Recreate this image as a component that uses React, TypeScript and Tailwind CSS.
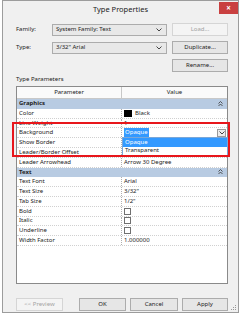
import { ReactNode } from 'react';

const font = { fontFamily: '"Noto Sans", "Open Sans", sans-serif' };

function Chevron() {
  return (
    <svg width="6" height="4" viewBox="0 0 6 4" className="shrink-0">
      <path d="M0.5 0.5 L3 3 L5.5 0.5" fill="none" stroke="#444" strokeWidth="1" />
    </svg>
  );
}

function Collapse() {
  return (
    <svg width="5" height="6" viewBox="0 0 5 6">
      <path d="M0.5 2.5 L2.5 0.5 L4.5 2.5 M0.5 5 L2.5 3 L4.5 5" fill="none" stroke="#333" strokeWidth="0.8" />
    </svg>
  );
}

function Check() {
  return <div className="w-[7px] h-[7px] border border-[#707070] bg-white" />;
}

type Row = { section?: boolean; name: string; value?: ReactNode };

const rows: Row[] = [
  { section: true, name: 'Graphics' },
  {
    name: 'Color',
    value: (
      <span className="flex items-center gap-[3px]">
        <span className="w-[8px] h-[7px] bg-black" />
        Black
      </span>
    ),
  },
  { name: 'Line Weight', value: '1' },
  { name: 'Background', value: 'combo' },
  { name: 'Show Border', value: '' },
  { name: 'Leader/Border Offset', value: '' },
  { name: 'Leader Arrowhead', value: 'Arrow 30 Degree' },
  { section: true, name: 'Text' },
  { name: 'Text Font', value: 'Arial' },
  { name: 'Text Size', value: '3/32"' },
  { name: 'Tab Size', value: '1/2"' },
  { name: 'Bold', value: <Check /> },
  { name: 'Italic', value: <Check /> },
  { name: 'Underline', value: <Check /> },
  { name: 'Width Factor', value: '1.000000' },
];

function Btn({ children, disabled, className = '' }: { children: ReactNode; disabled?: boolean; className?: string }) {
  return (
    <div
      className={`h-[13px] flex items-center justify-center border text-[6px] ${
        disabled ? 'border-[#d5d5d5] bg-[#f4f4f4] text-[#a3a3a3]' : 'border-[#acacac] bg-[#e6e6e6] text-[#222]'
      } ${className}`}
    >
      {children}
    </div>
  );
}

function Combo({ text }: { text: string }) {
  return (
    <div className="w-[115px] h-[12px] border border-[#acacac] bg-[#e8e8e8] flex items-center justify-between pl-[3px] pr-[4px] text-[6px] text-[#222]">
      <span>{text}</span>
      <Chevron />
    </div>
  );
}

export default function App() {
  return (
    <div className="w-[241px] h-[320px] bg-white relative overflow-hidden" style={font}>
      <div className="ml-[2px] w-[237px] h-[313px] border border-[#9c9c9c] bg-[#f0f0f0] flex flex-col pl-[13px] pr-[10px] relative">
        {/* title bar */}
        <div className="h-[18px] -ml-[13px] -mr-[10px] flex items-center justify-center text-[7.5px] text-[#222] relative">
          Type Properties
          <div className="absolute right-0 top-[1px] w-[19px] h-[12px] bg-[#c94040] flex items-center justify-center text-white text-[8px] font-bold leading-none">
            ×
          </div>
        </div>

        <div className="mt-[4px] flex items-center">
          <span className="w-[36px] text-[6px] text-[#222]">Family:</span>
          <Combo text="System Family: Text" />
          <Btn disabled className="ml-auto w-[56px]">Load...</Btn>
        </div>
        <div className="mt-[5px] flex items-center">
          <span className="w-[36px] text-[6px] text-[#222]">Type:</span>
          <Combo text={'3/32" Arial'} />
          <Btn className="ml-auto w-[56px] h-[12px]">Duplicate...</Btn>
        </div>
        <div className="mt-[5px] flex justify-end">
          <Btn className="w-[56px] h-[12px]">Rename...</Btn>
        </div>
        <div className="h-[14px] flex items-center text-[6px] text-[#222]">Type Parameters</div>

        {/* table */}
        <div className="w-[212px] h-[198px] border border-[#8a8a8a] bg-white relative text-[6px] text-[#222]">
          <div className="h-[12px] flex border-b border-[#c8c8c8] bg-[#fafafa]">
            <div className="w-[105px] border-r border-[#c8c8c8] flex items-center justify-center">Parameter</div>
            <div className="flex-1 flex items-center justify-center">Value</div>
          </div>
          {rows.map((r) =>
            r.section ? (
              <div key={r.name} className="h-[9.8px] flex items-center justify-between bg-[#b8cbe2] pl-[2px] pr-[4px] font-bold">
                <span>{r.name}</span>
                <Collapse />
              </div>
            ) : (
              <div key={r.name} className="h-[9.8px] flex border-b border-dotted border-[#d0d0d0]">
                <div className="w-[105px] border-r border-dotted border-[#b0b0b0] flex items-center pl-[2px]">{r.name}</div>
                <div className="flex-1 flex items-center pl-[2px]">
                  {r.value === 'combo' ? (
                    <div className="w-full h-[9px] flex items-center justify-between bg-white">
                      <span className="bg-[#3399ff] text-white px-[1px]">Opaque</span>
                      <div className="w-[9px] h-[8px] border border-[#9a9a9a] bg-[#ececec] flex items-center justify-center mr-[1px]">
                        <Chevron />
                      </div>
                    </div>
                  ) : (
                    r.value
                  )}
                </div>
              </div>
            )
          )}
          {/* open dropdown list */}
          <div className="absolute left-[105px] top-[50px] w-[106px] h-[19px] border border-[#7aa7d8] bg-white flex flex-col">
            <div className="h-[8.5px] bg-[#3399ff] text-white flex items-center pl-[2px]">Opaque</div>
            <div className="h-[8.5px] flex items-center pl-[2px]">Transparent</div>
          </div>
        </div>

        <div className="mt-[14px] flex justify-between">
          <Btn disabled className="w-[47px]">&lt;&lt; Preview</Btn>
          <div className="flex gap-[4px]">
            <Btn className="w-[47px]">OK</Btn>
            <Btn className="w-[48px]">Cancel</Btn>
            <Btn className="w-[46px]">Apply</Btn>
          </div>
        </div>

        <svg width="6" height="6" viewBox="0 0 6 6" className="absolute right-[1px] bottom-[1px]">
          <rect x="4" y="0" width="1" height="1" fill="#999" />
          <rect x="2" y="2" width="1" height="1" fill="#999" />
          <rect x="4" y="2" width="1" height="1" fill="#999" />
          <rect x="0" y="4" width="1" height="1" fill="#999" />
          <rect x="2" y="4" width="1" height="1" fill="#999" />
          <rect x="4" y="4" width="1" height="1" fill="#999" />
        </svg>
      </div>

      {/* red highlight */}
      <div className="absolute left-[12px] top-[122px] w-[218px] h-[35px] border-2 border-[#e8161b]" />
    </div>
  );
}
